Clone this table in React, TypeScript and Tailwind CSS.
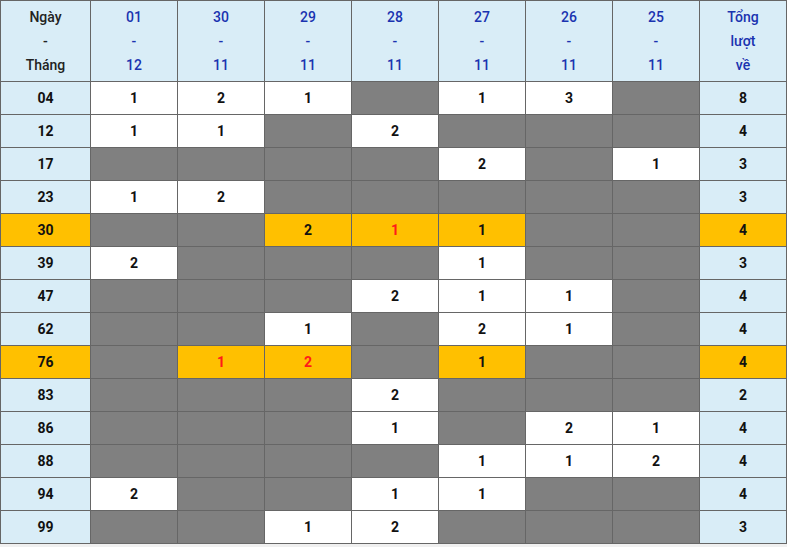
const dates = [
  ["01", "12"],
  ["30", "11"],
  ["29", "11"],
  ["28", "11"],
  ["27", "11"],
  ["26", "11"],
  ["25", "11"],
];

// null = no hit (gray cell). "r" suffix = red number on a highlighted cell
type Cell = string | null;

const rows: { num: string; hot?: boolean; cells: Cell[]; total: string }[] = [
  { num: "04", cells: ["1", "2", "1", null, "1", "3", null], total: "8" },
  { num: "12", cells: ["1", "1", null, "2", null, null, null], total: "4" },
  { num: "17", cells: [null, null, null, null, "2", null, "1"], total: "3" },
  { num: "23", cells: ["1", "2", null, null, null, null, null], total: "3" },
  { num: "30", hot: true, cells: [null, null, "2", "1r", "1", null, null], total: "4" },
  { num: "39", cells: ["2", null, null, null, "1", null, null], total: "3" },
  { num: "47", cells: [null, null, null, "2", "1", "1", null], total: "4" },
  { num: "62", cells: [null, null, "1", null, "2", "1", null], total: "4" },
  { num: "76", hot: true, cells: [null, "1r", "2r", null, "1", null, null], total: "4" },
  { num: "83", cells: [null, null, null, "2", null, null, null], total: "2" },
  { num: "86", cells: [null, null, null, "1", null, "2", "1"], total: "4" },
  { num: "88", cells: [null, null, null, null, "1", "1", "2"], total: "4" },
  { num: "94", cells: ["2", null, null, "1", "1", null, null], total: "4" },
  { num: "99", cells: [null, null, "1", "2", null, null, null], total: "3" },
];

function BodyCell({ value, hot }: { value: Cell; hot?: boolean }) {
  if (value === null) {
    return <td className="border border-[#666] bg-[#808080]" />;
  }
  const red = value.endsWith("r");
  const text = red ? value.slice(0, -1) : value;
  return (
    <td
      className={`border border-[#666] text-center font-bold ${
        hot ? "bg-[#ffc000]" : "bg-white"
      } ${red ? "text-[#ff1a1a]" : "text-[#111]"}`}
    >
      {text}
    </td>
  );
}

export default function App() {
  return (
    <div className="min-h-screen w-[787px] bg-[#f0f0f0] font-['Roboto',sans-serif] text-[14px]">
      <table className="w-[786px] table-fixed border-collapse border border-[#666]">
        <colgroup>
          <col className="w-[90px]" />
          {dates.map((_, i) => (
            <col key={i} className="w-[87px]" />
          ))}
          <col className="w-[87px]" />
        </colgroup>
        <thead>
          <tr className="h-[81px] bg-[#d9edf7]">
            <th className="border border-[#666] font-medium leading-[24px] text-[#222]">
              Ngày
              <br />-<br />
              Tháng
            </th>
            {dates.map(([d, m]) => (
              <th
                key={d + m}
                className="border border-[#666] font-medium leading-[24px] text-[#1a33b0]"
              >
                {d}
                <br />-<br />
                {m}
              </th>
            ))}
            <th className="border border-[#666] font-medium leading-[24px] text-[#1a33b0]">
              Tổng
              <br />
              lượt
              <br />
              về
            </th>
          </tr>
        </thead>
        <tbody>
          {rows.map((r) => (
            <tr key={r.num} className="h-[33px]">
              <td
                className={`border border-[#666] text-center font-bold text-[#111] ${
                  r.hot ? "bg-[#ffc000]" : "bg-[#d9edf7]"
                }`}
              >
                {r.num}
              </td>
              {r.cells.map((c, i) => (
                <BodyCell key={i} value={c} hot={r.hot} />
              ))}
              <td
                className={`border border-[#666] text-center font-bold text-[#111] ${
                  r.hot ? "bg-[#ffc000]" : "bg-[#d9edf7]"
                }`}
              >
                {r.total}
              </td>
            </tr>
          ))}
        </tbody>
      </table>
    </div>
  );
}
